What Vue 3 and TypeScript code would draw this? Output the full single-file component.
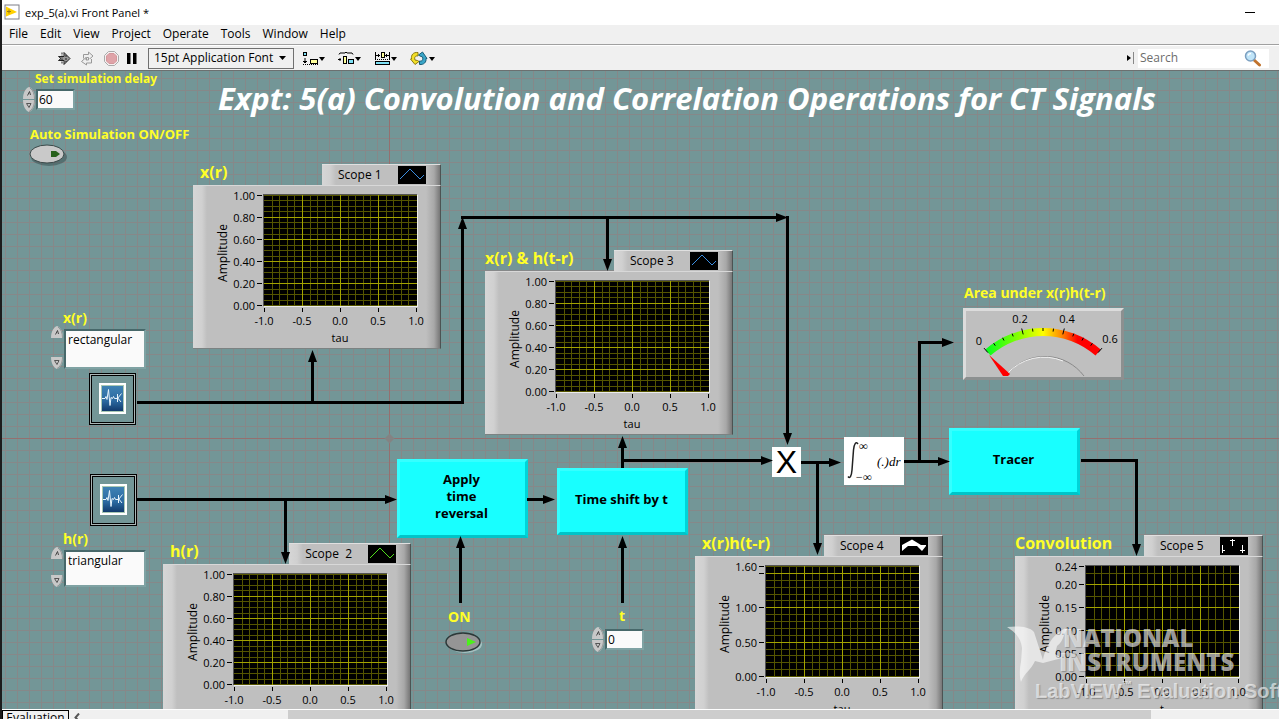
<script setup lang="ts">
import { ref } from 'vue'

interface Tick { value: number; label: string }
interface Scope {
  id: string
  title: string
  legend: string
  x: number
  y: number
  xLabel: string
  max: number
  minor: number
  ticks: Tick[]
  flush?: boolean
  style: 'blue' | 'green' | 'fill' | 'stem'
}

/* Visible corner of the panel inside the window. */
const view = { x: 2, y: 71 }
const at = (x: number, y: number) => ({ left: `${x - view.x}px`, top: `${y - view.y}px` })
const box = (x: number, y: number, w: number, h: number) => ({ ...at(x, y), width: `${w}px`, height: `${h}px` })

const menus = ['File', 'Edit', 'View', 'Project', 'Operate', 'Tools', 'Window', 'Help']

const unitTicks: Tick[] = [1, 0.8, 0.6, 0.4, 0.2, 0].map(v => ({ value: v, label: v.toFixed(2) }))
const areaTicks: Tick[] = [
  { value: 1.6, label: '1.60' }, { value: 1.5, label: '' }, { value: 1, label: '1.00' },
  { value: 0.5, label: '0.50' }, { value: 0, label: '0.00' },
]
const convTicks: Tick[] = [0.24, 0.2, 0.15, 0.1, 0.05, 0].map(v => ({ value: v, label: v.toFixed(2) }))

const scopes: Scope[] = [
  { id: 's1', title: 'x(r)', legend: 'Scope 1', x: 193, y: 164, xLabel: 'tau', max: 1, minor: 0.05, ticks: unitTicks, style: 'blue' },
  { id: 's2', title: 'h(r)', legend: 'Scope  2', x: 163, y: 543, xLabel: 'tau', max: 1, minor: 0.05, ticks: unitTicks, style: 'green' },
  { id: 's3', title: 'x(r) & h(t-r)', legend: 'Scope 3', x: 485, y: 250, xLabel: 'tau', max: 1, minor: 0.05, ticks: unitTicks, style: 'blue', flush: true },
  { id: 's4', title: 'x(r)h(t-r)', legend: 'Scope 4', x: 695, y: 535, xLabel: 'tau', max: 1.6, minor: 0.1, ticks: areaTicks, style: 'fill' },
  { id: 's5', title: 'Convolution', legend: 'Scope 5', x: 1015, y: 535, xLabel: 't', max: 0.24, minor: 0.025, ticks: convTicks, style: 'stem', flush: true },
]
const xTicks = ['-1.0', '-0.5', '0.0', '0.5', '1.0']
const yOf = (s: Scope, v: number) => Math.round(9 + 110 * (1 - v / s.max))
const xOf = (i: number) => Math.round(71 + 7.6 * i)
const minorRows = (s: Scope) => {
  const rows: number[] = []
  for (let v = 0; v <= s.max + 0.0001; v += s.minor) rows.push(yOf(s, v))
  return rows
}
const majorRows = (s: Scope) => s.ticks.map(t => t.value).filter(v => v > 0 && v < s.max).map(v => yOf(s, v))

const wires = [
  'M137 402.5H462.5V222', 'M312.5 402V360', 'M461 217.5H780', 'M787.5 216V436', 'M607.5 217V262',
  'M137 499.5H388', 'M285.5 499V555', 'M527 499.5H545', 'M622.5 468V446', 'M622 460.5H763',
  'M801 462.5H830', 'M817.5 462V546', 'M904 461.5H939', 'M919.5 461V342.5H944',
  'M1081 460.5H1136.5V546', 'M460.5 603V546', 'M622.5 603V546',
]
/* Arrow tips: x, y, rotation from pointing right. */
const heads: [number, number, number][] = [
  [462.5, 217, -90], [312.5, 350, -90], [788, 217.5, 0], [787.5, 445, 90], [607.5, 271, 90],
  [397, 499.5, 0], [285.5, 564, 90], [555, 499.5, 0], [622.5, 436, -90], [773, 460.5, 0],
  [841, 462.5, 0], [817.5, 555, 90], [950, 461.5, 0], [954, 342.5, 0], [1136.5, 556, 90],
  [460.5, 536, -90], [622.5, 536, -90],
]

const blocks = [
  { lines: ['Apply', 'time', 'reversal'], x: 397, y: 459, w: 131, h: 79 },
  { lines: ['Time shift by t'], x: 557, y: 468, w: 131, h: 67 },
  { lines: ['Tracer'], x: 949, y: 428, w: 131, h: 67 },
]
const generators = [{ x: 89, y: 373 }, { x: 90, y: 474 }]
const rings = [
  { id: 'xr', label: 'x(r)', value: 'rectangular', x: 51, y: 310, h: 36 },
  { id: 'hr', label: 'h(r)', value: 'triangular', x: 51, y: 531, h: 33 },
]
const numerics = [
  { id: 'delay', x: 23, y: 87, model: ref('60') },
  { id: 'shift', x: 592, y: 627, model: ref('0') },
]

const cx = 80
const cy = 108
const polar = (r: number, deg: number) => {
  const a = (deg * Math.PI) / 180
  return `${(cx + r * Math.sin(a)).toFixed(1)} ${(cy - r * Math.cos(a)).toFixed(1)}`
}
const band = `M${polar(88, -41)}A88 88 0 0 1 ${polar(88, 41)}L${polar(80, 41)}A80 80 0 0 0 ${polar(80, -41)}Z`
const meterTicks = Array.from({ length: 13 }, (_, i) => {
  const deg = -41 + (82 / 12) * i
  return `M${polar(i % 4 === 0 ? 84 : 85, deg)}L${polar(i % 4 === 0 ? 90 : 88, deg)}`
}).join('')
</script>

<template>
  <div class="window">
    <header class="titlebar">
      <svg class="app-icon" width="17" height="17" viewBox="0 0 17 17">
        <rect x="1" y="1" width="14" height="14" fill="#fff" stroke="#7f7f88" />
        <path d="M2 2.5L13 8L2 12.500Z" fill="#ffd000" />
        <path d="M3 7.500h4M5 5.500v4" stroke="#9a7a10" />
      </svg>
      <span class="title">exp_5(a).vi Front Panel *</span>
      <button class="minimize" type="button" aria-label="Minimize"></button>
    </header>

    <nav class="menubar">
      <button v-for="m in menus" :key="m" type="button">{{ m }}</button>
    </nav>

    <div class="toolbar">
      <div class="run-tools">
        <button type="button" aria-label="Run">
          <svg width="15" height="15" viewBox="0 0 15 15">
            <path d="M1.500 5.500H7V1.500L13 7.500L7 13.500V9.500H1.500L4 7.500Z" fill="#999" stroke="#222" />
            <path d="M5 1.500V13M9 4V11" stroke="#222" stroke-dasharray="2 1" />
          </svg>
        </button>
        <button type="button" aria-label="Run continuously">
          <svg width="17" height="15" viewBox="0 0 17 15" fill="#eee" stroke="#999">
            <path d="M4.500 7.500V3.500H9.500V1L14 5L9.500 9V6.500H7.500V9" />
            <path d="M12.500 8V12H7.500V14L2.500 10.500L7 6.500V9H9.500V8" />
          </svg>
        </button>
        <button type="button" aria-label="Abort">
          <svg width="17" height="17" viewBox="0 0 17 17">
            <path d="M5.500 1.500h6l4 4v6l-4 4h-6l-4-4v-6z" fill="#f4f0f0" stroke="#aaa" />
            <path d="M6 3.500h5L13.500 6v5L11 13.500H6L3.500 11V6z" fill="#dfa3a8" stroke="#d4979c" />
          </svg>
        </button>
        <button type="button" aria-label="Pause">
          <svg width="10" height="11" viewBox="0 0 10 11"><path d="M0 0h3.500v11H0zM6 0h3.500v11H6z" /></svg>
        </button>
      </div>
      <div class="font-box">
        <select aria-label="Text settings"><option>15pt Application Font</option></select>
        <svg width="7" height="4" viewBox="0 0 7 4"><path d="M0 0h7L3.500 4z" /></svg>
      </div>
      <div class="object-tools">
        <button type="button" aria-label="Align objects">
          <svg width="24" height="15" viewBox="0 0 24 15">
            <rect x="1.500" y="1.500" width="3" height="3" fill="#7de0f5" stroke="#000" />
            <rect x="8.500" y="8.500" width="7" height="4" fill="#ffff9c" stroke="#000" />
            <path d="M3 7V11M1 10.500h4M2 11.500h2" stroke="#000" /><path d="M1 13.500h15" stroke="#000" stroke-dasharray="1 1" />
            <path d="M17 6h6l-3 4z" />
          </svg>
        </button>
        <button type="button" aria-label="Distribute objects">
          <svg width="24" height="15" viewBox="0 0 24 15">
            <path d="M1 3.500l1-1.500h5l1-1 1 1h5l1 1.500" fill="none" stroke="#000" />
            <path d="M0 8.500h3M2 7v3" stroke="#000" />
            <rect x="5.500" y="5.500" width="3" height="7" fill="#ffff9c" stroke="#000" />
            <rect x="10.500" y="8.500" width="5" height="4" fill="#7de0f5" stroke="#000" />
            <path d="M17 6h6l-3 4z" />
          </svg>
        </button>
        <button type="button" aria-label="Resize objects">
          <svg width="24" height="15" viewBox="0 0 24 15">
            <path d="M1.500 1v7M15.500 1v7M2 4.500h4M11 4.500h4M4.500 3v3M12.500 3v3" stroke="#000" />
            <rect x="7.500" y="1.500" width="3" height="5" fill="#ffff9c" stroke="#000" />
            <path d="M1 8.500h15" stroke="#000" stroke-dasharray="1 1" />
            <rect x="1.500" y="10.500" width="14" height="3" fill="#7de0f5" stroke="#000" />
            <path d="M17 6h6l-3 4z" />
          </svg>
        </button>
        <button type="button" aria-label="Reorder">
          <svg width="25" height="15" viewBox="0 0 25 15">
            <path d="M8 1.500C3 1 1 4 1.500 8H.500L5 13.500L9 10.500L7.500 9.500L5 9C4 6 5.500 4.500 8 5Z" fill="#f2df28" stroke="#8a7a10" />
            <path d="M9.500 13.500C14 14 16.500 11 16 7.500H17L12.500 1L8.500 4L10 5L12.500 6C13.500 9 12 10.500 9.500 10Z" fill="#3aa6c8" stroke="#1b5e78" />
            <path d="M19 6h6l-3 4z" />
          </svg>
        </button>
      </div>
      <div class="search">
        <svg class="pin" width="7" height="12" viewBox="0 0 7 12"><path d="M0 3l4 3-4 3z" /><path d="M6.500 0v12" stroke="#888" /></svg>
        <div class="search-box">
          <input type="text" placeholder="Search" aria-label="Search" />
          <svg width="18" height="17" viewBox="0 0 18 17">
            <path d="M9.500 9.500L15.500 15" stroke="#c0722c" stroke-width="3" stroke-linecap="round" />
            <circle cx="6.500" cy="6" r="5" fill="#bfe4f8" stroke="#7b9fc0" stroke-width="1.500" />
            <path d="M4 5.500c.5-1.500 1.500-2 3-2" stroke="#fff" fill="none" stroke-width="1.500" />
          </svg>
        </div>
      </div>
    </div>

    <main class="canvas">
      <svg class="layer" width="100%" height="100%">
        <g :transform="`translate(${-view.x} ${-view.y})`">
          <path d="M389.500 0V2000M0 438.500H3000" stroke="#94706f" />
          <path d="M389.500 433.500l5 5-5 5-5-5z" fill="#838383" />
        </g>
      </svg>

      <h1 :style="at(218, 78)">Expt: 5(a) Convolution and Correlation Operations for CT Signals</h1>

      <label class="label" for="delay" :style="at(35, 71)">Set simulation delay</label>
      <div v-for="n in numerics" :key="n.id" class="numeric" :style="at(n.x, n.y)">
        <div class="spin">
          <button type="button" aria-label="Increment"><svg width="12" height="12" viewBox="0 0 12 12"><path d="M0 12C0 5 3 1 6 0C9 1 12 5 12 12Z" fill="#c8c8c8" /><path d="M11.500 12C11.500 7 10 3 7 1" fill="none" stroke="#8f9494" /><path d="M4.500 8.500L6.500 4.500L7.500 8" fill="none" stroke="#444" /></svg></button>
          <button type="button" aria-label="Decrement"><svg width="12" height="12" viewBox="0 0 12 12"><path d="M0 0C0 7 3 11 6 12C9 11 12 7 12 0Z" fill="#c8c8c8" /><path d="M11.500 0C11.500 6 9 10 6 11.500" fill="none" stroke="#8f9494" /><path d="M3.500 3.500H8L6 7.500Z" fill="none" stroke="#555" /></svg></button>
        </div>
        <input :id="n.id" v-model="n.model.value" type="text" />
      </div>

      <label class="label medium" for="auto" :style="at(30, 126)">Auto Simulation ON/OFF</label>
      <button id="auto" class="toggle" type="button" :style="at(29, 144)">
        <svg width="40" height="24" viewBox="0 0 40 24">
          <ellipse cx="20" cy="13" rx="18" ry="9" fill="#3f5758" opacity=".6" />
          <ellipse cx="18" cy="10" rx="17" ry="9" fill="#c9c9c9" stroke="#3c4a4a" />
          <path d="M22 7h5l4 3-4 3h-5z" fill="#27611b" />
        </svg>
      </button>

      <section v-for="r in rings" :key="r.id" class="ring" :style="at(r.x, r.y)">
        <label class="label large" :for="r.id">{{ r.label }}</label>
        <div class="ring-body">
          <div class="spin apart">
            <button type="button" aria-label="Previous"><svg width="12" height="12" viewBox="0 0 12 12"><path d="M0 12C0 5 3 1 6 0C9 1 12 5 12 12Z" fill="#c8c8c8" /><path d="M11.500 12C11.500 7 10 3 7 1" fill="none" stroke="#8f9494" /><path d="M4.500 8.500L6.500 4.500L7.500 8" fill="none" stroke="#444" /></svg></button>
            <button type="button" aria-label="Next"><svg width="12" height="12" viewBox="0 0 12 12"><path d="M0 0C0 7 3 11 6 12C9 11 12 7 12 0Z" fill="#c8c8c8" /><path d="M11.500 0C11.500 6 9 10 6 11.500" fill="none" stroke="#8f9494" /><path d="M3.500 3.500H8L6 7.500Z" fill="none" stroke="#555" /></svg></button>
          </div>
          <div class="ring-value" :style="{ height: `${r.h}px` }">
            <select :id="r.id"><option>{{ r.value }}</option></select>
          </div>
        </div>
      </section>

      <div v-for="g in generators" :key="g.y" class="generator" :style="at(g.x, g.y)">
        <svg width="47" height="52" viewBox="0 0 47 52">
          <rect x=".5" y=".5" width="46" height="51" fill="none" stroke="#000" />
          <rect x="1.500" y="1.500" width="44" height="49" fill="none" stroke="#aab5b5" />
          <rect x="2.500" y="2.500" width="42" height="47" fill="#739697" stroke="#000" />
          <rect x="10" y="10" width="27" height="31" fill="#fff" />
          <rect x="12" y="12" width="23" height="27" fill="#a9c8b4" />
          <rect x="13" y="13" width="21" height="25" fill="url(#scopeblue)" />
          <path d="M13 25.500h3l1-2 1 3 1.500-10 1.500 16 1-8 1.500 1 1-2 1 2h3l4-5M28 24l4 5M28.500 21v8" fill="none" stroke="#e8f4fc" />
          <defs>
            <linearGradient id="scopeblue" x1="0" y1="0" x2="0" y2="1">
              <stop offset="0" stop-color="#3f82b4" /><stop offset=".6" stop-color="#2b69a0" /><stop offset="1" stop-color="#123a6c" />
            </linearGradient>
          </defs>
        </svg>
      </div>

      <section v-for="s in scopes" :key="s.id" class="scope" :style="at(s.x, s.y)">
        <h2 :class="{ flush: s.flush }">{{ s.title }}</h2>
        <div class="legend">
          <span>{{ s.legend }}</span>
          <svg width="28" height="18" viewBox="0 0 28 18">
            <rect width="28" height="18" fill="#000" />
            <path v-if="s.style === 'blue'" d="M2 13L12 3L22 13L26 9" fill="none" stroke="#3b8de0" />
            <path v-else-if="s.style === 'green'" d="M2 13L12 3L22 13L26 9" fill="none" stroke="#4fe01c" />
            <path v-else-if="s.style === 'fill'" d="M2 8L12 2.500L21 8H26V9L22 14L17 9H8L2 14Z" fill="#fff" />
            <path v-else d="M2.500 8V16M2 13.500h3M12.500 2V9M10 3.500h5M22.500 8V16M20 13.500h5" fill="none" stroke="#fff" />
          </svg>
        </div>
        <div class="plot">
          <svg width="246" height="162" viewBox="0 0 246 162">
            <g shape-rendering="crispEdges">
              <rect x="71" y="9" width="154" height="112" fill="#ececec" />
              <rect x="70" y="8" width="154" height="112" fill="#555" />
              <rect x="71" y="9" width="153" height="111" fill="#000" />
              <path v-for="i in 19" :key="`v${i}`" :d="`M${xOf(i)}.5 9V120`" stroke="#555500" />
              <path v-for="y in minorRows(s)" :key="`m${y}`" :d="`M71 ${y}.5H224`" stroke="#555500" />
              <path v-for="i in [5, 10, 15]" :key="`w${i}`" :d="`M${xOf(i)}.5 9V120`" stroke="#a3a300" />
              <path v-for="y in majorRows(s)" :key="`h${y}`" :d="`M71 ${y}.5H224`" stroke="#a3a300" />
              <path v-for="t in s.ticks" :key="`t${t.value}`" :d="`M64 ${yOf(s, t.value)}.5h5`" stroke="#000" />
              <path v-for="(t, i) in xTicks" :key="`x${t}`" :d="`M${xOf(i * 5)}.5 122v4`" stroke="#000" />
            </g>
            <text v-for="t in s.ticks" :key="`l${t.value}`" x="62" :y="yOf(s, t.value) + 5" text-anchor="end">{{ t.label }}</text>
            <text v-for="(t, i) in xTicks" :key="`k${t}`" :x="xOf(i * 5)" y="139" text-anchor="middle">{{ t }}</text>
            <text transform="translate(34 67) rotate(-90)" text-anchor="middle" class="axis">Amplitude</text>
            <text x="147" y="156" text-anchor="middle">{{ s.xLabel }}</text>
          </svg>
        </div>
      </section>

      <section class="meter" :style="at(963, 285)">
        <h3 class="label large">Area under x(r)h(t-r)</h3>
        <svg width="161" height="72" viewBox="0 0 161 72">
          <defs>
            <linearGradient id="heat">
              <stop offset="0" stop-color="#00ff20" /><stop offset=".3" stop-color="#8cff00" /><stop offset=".5" stop-color="#ffff00" />
              <stop offset=".65" stop-color="#ff9000" /><stop offset=".8" stop-color="#ff0000" />
            </linearGradient>
          </defs>
          <rect width="161" height="72" fill="#8c9090" />
          <path d="M0 0H161L158 3H3V69L0 72Z" fill="#dcdcdc" />
          <rect x="3" y="3" width="155" height="66" fill="#bfbfbf" />
          <path :d="band" fill="url(#heat)" />
          <path :d="meterTicks" stroke="#000" fill="none" />
          <path d="M46 64A49 49 0 0 1 121 68" fill="none" stroke="#8a8a8a" />
          <path d="M44 66A49 49 0 0 1 100 53" fill="none" stroke="#f2f2f2" />
          <path d="M26 47L47 66L45 68L40 68Z" fill="#ff0000" />
          <text x="16" y="37" text-anchor="middle">0</text>
          <text x="57" y="15" text-anchor="middle">0.2</text>
          <text x="104" y="15" text-anchor="middle">0.4</text>
          <text x="147" y="35" text-anchor="middle">0.6</text>
        </svg>
      </section>

      <div v-for="b in blocks" :key="b.lines[0]" class="block" :style="box(b.x, b.y, b.w, b.h)">
        <span v-for="l in b.lines" :key="l">{{ l }}</span>
      </div>

      <div class="times" :style="box(772, 447, 29, 30)">X</div>
      <div class="integral" :style="box(844, 437, 60, 48)">
        <svg width="60" height="48" viewBox="0 0 60 48">
          <path d="M14 7C12 4 10 7 9.500 13L8 33C7.500 39 6 42 4 39.500" fill="none" stroke="#222" stroke-width="1.500" />
          <text x="15" y="13" class="inf">∞</text>
          <text x="11" y="44" class="inf">−∞</text>
          <text x="33" y="29" class="expr">(.)dr</text>
        </svg>
      </div>

      <label class="label large" for="reverse" :style="at(448, 609)">ON</label>
      <button id="reverse" class="toggle" type="button" :style="at(445, 632)">
        <svg width="40" height="24" viewBox="0 0 40 24">
          <ellipse cx="20" cy="12" rx="17" ry="9" fill="#b9d4d4" opacity=".7" />
          <ellipse cx="18" cy="10" rx="17" ry="9" fill="#959595" stroke="#2c3838" stroke-width="1.500" />
          <path d="M22 6l9 4-9 4z" fill="#4cf01c" />
        </svg>
      </button>
      <label class="label large" for="shift" :style="at(619, 608)">t</label>

      <svg class="layer wires" width="100%" height="100%">
        <g :transform="`translate(${-view.x} ${-view.y})`">
          <path v-for="w in wires" :key="w" :d="w" fill="none" stroke="#000" stroke-width="3" />
          <path v-for="(h, i) in heads" :key="i" d="M0 0L-12 -4.500V4.500Z" :transform="`translate(${h[0]} ${h[1]}) rotate(${h[2]})`" />
        </g>
      </svg>

      <div class="watermark" :style="at(1007, 626)">
        <svg width="62" height="58" viewBox="0 0 62 58">
          <path d="M0 1C10 0 22 0 27 6L36 34C38 22 46 6 62 1C55 8 58 14 50 20L48 28L55 32L36 37L28 35C24 44 18 46 14 56C12 50 13 40 14 36L15 22C14 12 8 6 0 1Z" fill="#fff" opacity=".6" />
        </svg>
        <div class="brand"><span>NATIONAL</span><span>INSTRUMENTS</span></div>
        <p>LabVIEW<sup>™</sup> Evaluation Software</p>
      </div>
    </main>

    <footer class="statusbar">
      <span class="tab">Evaluation</span>
      <span class="chevron"><svg width="6" height="9" viewBox="0 0 6 9"><path d="M5 .5L1.500 4.500L5 8.500" fill="none" stroke="#555" stroke-width="2" /></svg></span>
      <div class="track"><div class="thumb"></div></div>
    </footer>
  </div>
</template>

<style>
html, body { margin: 0; overflow: hidden; }
</style>

<style scoped>
.window {
  display: flex;
  flex-direction: column;
  height: 100vh;
  box-sizing: border-box;
  overflow: hidden;
  background: #f0f0f0;
  color: #000;
  font-family: "Open Sans", "Noto Sans", sans-serif;
  font-size: 12px;
  line-height: 16px;
  border-left: 2px solid #1c1c1c;
}
button, input, select { font: inherit; color: inherit; border: 0; padding: 0; margin: 0; background: none; }
button { display: flex; align-items: center; }
svg { display: block; flex: none; }
.titlebar { display: flex; align-items: center; flex: none; height: 25px; background: #fff; padding: 0 24px 0 2px; gap: 4px; font-size: 11px; }
.minimize { margin-left: auto; width: 10px; height: 1px; background: #000; }
.menubar { display: flex; flex: none; gap: 12px; height: 20px; padding: 0 7px 2px; align-items: center; border-bottom: 1px solid #a0a0a0; box-sizing: border-box; }
.toolbar { display: flex; flex: none; align-items: center; height: 26px; box-sizing: border-box; border-top: 1px solid #fff; border-bottom: 1px solid #6b7070; padding: 0 10px 0 55px; }
.run-tools { display: flex; align-items: center; gap: 7px; }
.font-box { display: flex; align-items: center; width: 146px; height: 21px; margin-left: 11px; box-sizing: border-box; border: 1px solid #707070; padding: 0 7px 0 5px; }
.font-box select { flex: 1; min-width: 0; appearance: none; }
.object-tools { display: flex; gap: 12px; margin-left: 8px; }
.search { display: flex; align-items: center; gap: 4px; margin-left: auto; }
.search-box { display: flex; align-items: center; width: 131px; height: 19px; background: #fff; box-sizing: border-box; padding: 0 7px 0 2px; }
.search-box input { flex: 1; min-width: 0; outline: 0; }
.search-box input::placeholder { color: #6d6d6d; opacity: 1; }

.canvas {
  position: relative; flex: 1; min-height: 0; overflow: hidden; background-color: #739697;
  background-image: linear-gradient(#868889 1px, transparent 1px), linear-gradient(90deg, #868889 1px, transparent 1px);
  background-size: 12px 12px; background-position: 3px 7px;
}
.canvas > * { position: absolute; }
.layer { left: 0; top: 0; }
.wires { pointer-events: none; }
h1, h2, h3, p { margin: 0; white-space: nowrap; }
h1 { color: #fff; font-size: 31px; line-height: 40px; font-style: italic; font-weight: 700; }
.label, h2 { color: #ffff28; font-size: 12px; line-height: 16px; font-weight: 700; white-space: nowrap; }
.label.medium { font-size: 13px; }
.label.large { font-size: 14px; }

.numeric { display: flex; align-items: center; gap: 1px; }
.spin { display: flex; flex-direction: column; gap: 1px; }
.numeric input { width: 39px; height: 21px; box-sizing: border-box; background: #fafafa; border: 2px solid; border-color: #47686a #7fa2a3 #7fa2a3 #47686a; padding-left: 1px; }
.ring { display: flex; flex-direction: column; }
.ring .label { padding-left: 12px; }
.ring-body { display: flex; gap: 1px; }
.spin.apart { justify-content: space-between; }
.ring-value { width: 78px; margin-top: 3px; background: #fafafa; border: 2px solid; border-color: #47686a #7fa2a3 #7fa2a3 #47686a; }
.ring-value select { display: block; width: 100%; height: 18px; appearance: none; padding-left: 2px; }

.scope { display: grid; width: 248px; grid-template-columns: 1fr auto; }
.scope h2 { align-self: start; font-size: 16px; line-height: 16px; padding-left: 7px; width: 0; }
.scope h2.flush { padding-left: 0; }
.scope .legend {
  display: flex; align-items: center; justify-content: space-between; gap: 16px; min-width: 119px; height: 22px; box-sizing: border-box;
  padding: 0 14px 0 16px; white-space: pre; border-top: 1px solid #e0e0e0; border-right: 1px solid #4c5353; border-bottom: 1px solid #8c8c8c;
  background: linear-gradient(90deg, #d6d6d6 0, #d0d0d0 8px, #bfbfbf 14px, #bfbfbf calc(100% - 14px), #a8a8a8 calc(100% - 6px), #777 100%);
}
.scope .plot {
  grid-column: 1 / -1; margin-top: -1px; border-top: 1px solid #d8d8d8; border-right: 1px solid #4c5353; border-bottom: 1px solid #7c8282;
  background: linear-gradient(90deg, #d6d6d6 0, #d0d0d0 9px, #bfbfbf 14px, #bfbfbf calc(100% - 14px), #a8a8a8 calc(100% - 6px), #777 100%);
}
.scope text, .meter text { font-size: 11px; fill: #000; }
.scope text.axis { font-size: 12px; }

.meter { display: flex; flex-direction: column; gap: 7px; }
.meter h3 { padding-left: 1px; }
.block {
  display: flex; flex-direction: column; align-items: center; justify-content: center; box-sizing: border-box;
  background: #18ffff; border: 3px solid; border-color: #35ffff #00d4d8 #00c4c8 #35ffff; padding: 0 2px 5px 0;
  font-size: 13px; line-height: 17px; font-weight: 700;
}
.times { background: #fff; font: 32px/30px "Liberation Sans", sans-serif; text-align: center; }
.integral { background: #fff; }
.inf { font: italic 12px "Liberation Serif", serif; }
.expr { font: italic 13px "Liberation Serif", serif; }

.watermark {
  display: grid; grid-template-columns: 52px auto; color: rgba(255, 255, 255, .6); pointer-events: none;
  text-shadow: 1px 1px 1px rgba(0, 0, 0, .25);
}
.brand { display: flex; flex-direction: column; font-size: 24px; line-height: 24px; font-weight: 800; }
.brand span:first-child { padding-left: 4px; }
.watermark p { grid-column: 1 / -1; padding-left: 28px; margin-top: -5px; font: 700 20px/24px "Liberation Sans", sans-serif; }
.watermark sup { font-size: 10px; line-height: 0; vertical-align: 10px; }

.statusbar { display: flex; flex: none; height: 10px; overflow: hidden; box-sizing: border-box; border-top: 1px solid #fff; }
.tab { flex: none; height: 20px; width: 67px; box-sizing: border-box; border: 1px solid #000; text-align: center; font-size: 12px; line-height: 14px; }
.chevron { flex: none; width: 40px; padding: 3px 0 0 5px; box-sizing: border-box; }
.track { flex: 1; padding: 0 128px 0 179px; }
.thumb { height: 20px; background: #cdcdcd; }
</style>
